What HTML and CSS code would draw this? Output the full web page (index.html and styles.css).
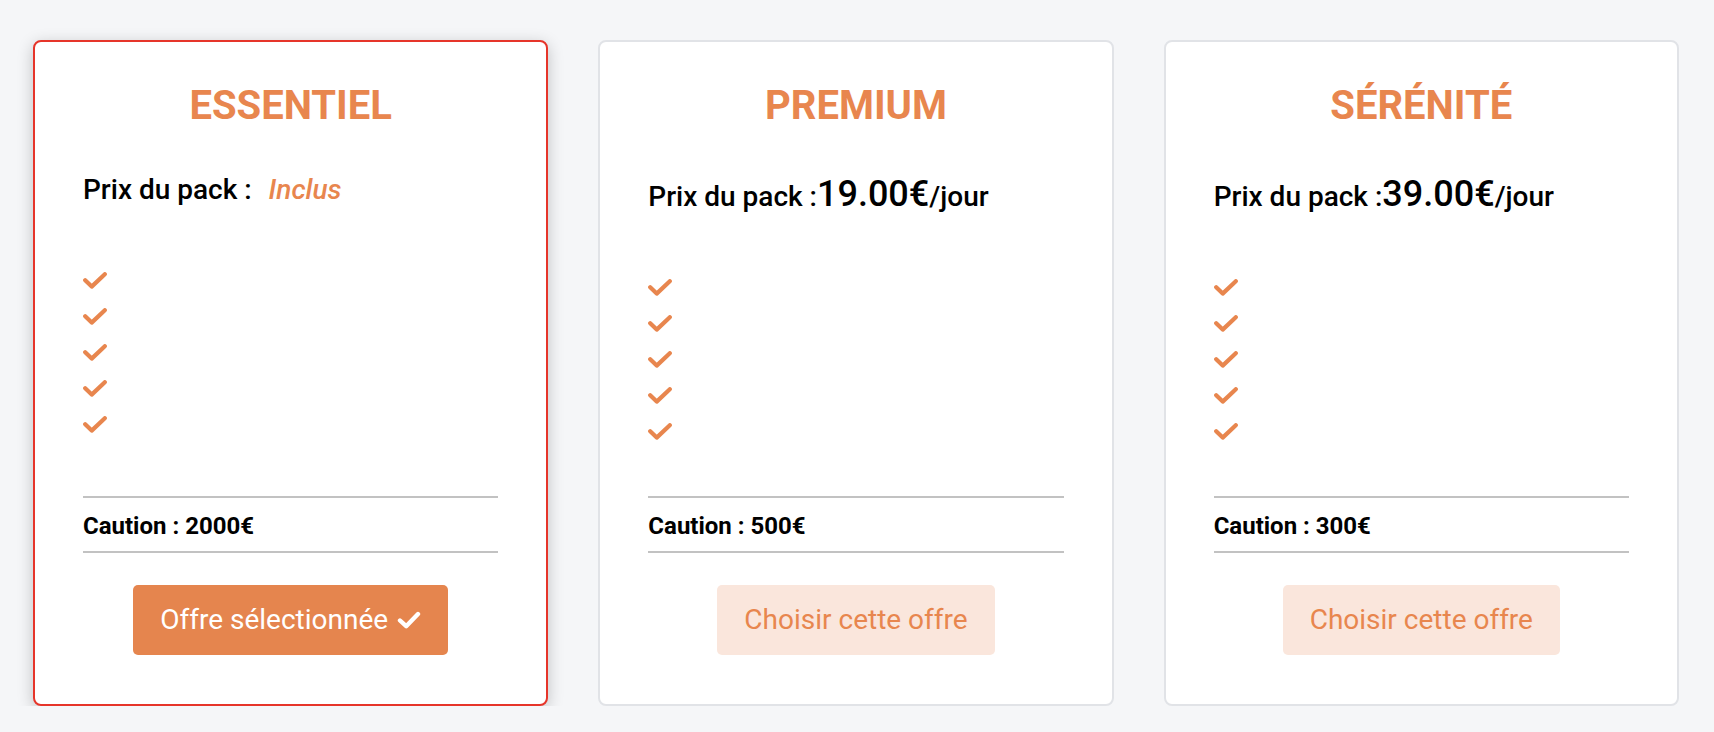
FILE: index.html
```html
<!DOCTYPE html>
<html lang="fr">
<head>
<meta charset="utf-8">
<title>Packs</title>
<link rel="stylesheet" href="styles.css">
</head>
<body>
<main class="offers">
  <section class="card card--selected">
    <h2 class="card__title">ESSENTIEL</h2>
    <p class="price">Prix du pack : <em class="price__included">Inclus</em></p>
    <ul class="features">
      <li><svg class="tick" viewBox="0 0 24 17"><polyline points="2.2,8.2 8.7,14.6 21.8,2.2"/></svg></li>
      <li><svg class="tick" viewBox="0 0 24 17"><polyline points="2.2,8.2 8.7,14.6 21.8,2.2"/></svg></li>
      <li><svg class="tick" viewBox="0 0 24 17"><polyline points="2.2,8.2 8.7,14.6 21.8,2.2"/></svg></li>
      <li><svg class="tick" viewBox="0 0 24 17"><polyline points="2.2,8.2 8.7,14.6 21.8,2.2"/></svg></li>
      <li><svg class="tick" viewBox="0 0 24 17"><polyline points="2.2,8.2 8.7,14.6 21.8,2.2"/></svg></li>
    </ul>
    <div class="card__footer">
      <p class="deposit">Caution : 2000€</p>
      <button class="btn btn--selected">Offre sélectionnée<svg class="btn__tick" viewBox="0 0 24 18"><polyline points="3,9.5 9.2,15.2 21,3"/></svg></button>
    </div>
  </section>

  <section class="card">
    <h2 class="card__title">PREMIUM</h2>
    <p class="price">Prix du pack :<span class="price__amount">19.00€</span>/jour</p>
    <ul class="features">
      <li><svg class="tick" viewBox="0 0 24 17"><polyline points="2.2,8.2 8.7,14.6 21.8,2.2"/></svg></li>
      <li><svg class="tick" viewBox="0 0 24 17"><polyline points="2.2,8.2 8.7,14.6 21.8,2.2"/></svg></li>
      <li><svg class="tick" viewBox="0 0 24 17"><polyline points="2.2,8.2 8.7,14.6 21.8,2.2"/></svg></li>
      <li><svg class="tick" viewBox="0 0 24 17"><polyline points="2.2,8.2 8.7,14.6 21.8,2.2"/></svg></li>
      <li><svg class="tick" viewBox="0 0 24 17"><polyline points="2.2,8.2 8.7,14.6 21.8,2.2"/></svg></li>
    </ul>
    <div class="card__footer">
      <p class="deposit">Caution : 500€</p>
      <button class="btn btn--choose">Choisir cette offre</button>
    </div>
  </section>

  <section class="card">
    <h2 class="card__title">SÉRÉNITÉ</h2>
    <p class="price">Prix du pack :<span class="price__amount">39.00€</span>/jour</p>
    <ul class="features">
      <li><svg class="tick" viewBox="0 0 24 17"><polyline points="2.2,8.2 8.7,14.6 21.8,2.2"/></svg></li>
      <li><svg class="tick" viewBox="0 0 24 17"><polyline points="2.2,8.2 8.7,14.6 21.8,2.2"/></svg></li>
      <li><svg class="tick" viewBox="0 0 24 17"><polyline points="2.2,8.2 8.7,14.6 21.8,2.2"/></svg></li>
      <li><svg class="tick" viewBox="0 0 24 17"><polyline points="2.2,8.2 8.7,14.6 21.8,2.2"/></svg></li>
      <li><svg class="tick" viewBox="0 0 24 17"><polyline points="2.2,8.2 8.7,14.6 21.8,2.2"/></svg></li>
    </ul>
    <div class="card__footer">
      <p class="deposit">Caution : 300€</p>
      <button class="btn btn--choose">Choisir cette offre</button>
    </div>
  </section>
</main>
</body>
</html>
```

FILE: styles.css
```css
* { box-sizing: border-box; }

html, body {
  margin: 0;
  padding: 0;
  background: #f5f6f8;
  font-family: Roboto, "Liberation Sans", Arial, sans-serif;
  color: #000;
}

.offers {
  display: grid;
  grid-template-columns: repeat(3, 1fr);
  gap: 50px;
  padding: 40px 35px 0 33px;
  align-items: stretch;
}

.card {
  display: flex;
  flex-direction: column;
  background: #fff;
  border: 2px solid #e1e3e7;
  border-radius: 8px;
  padding: 40px 48px 49px;
}

.card--selected {
  border-color: #e6352a;
  box-shadow: 0 4px 16px rgba(0, 0, 0, 0.22);
}

.card__title {
  margin: 0;
  text-align: center;
  font-size: 40px;
  line-height: 48px;
  font-weight: 700;
  color: #e8864e;
}

.price {
  margin: 43px 0 0;
  font-size: 28px;
  font-weight: 500;
  line-height: normal;
}

.price__included {
  display: inline-block;
  margin-left: 10px;
  padding-bottom: 3px;
  font-style: italic;
  color: #e8864e;
}

.price__amount {
  font-size: 36px;
  line-height: 1.2;
}

.features {
  list-style: none;
  margin: 53px 0 47px;
  padding: 0;
}

.features li {
  height: 36px;
  display: flex;
  align-items: center;
}

.tick {
  width: 24px;
  height: 17px;
  fill: none;
  stroke: #e8864e;
  stroke-width: 4.2;
  stroke-linecap: round;
  stroke-linejoin: round;
}

.card__footer {
  margin-top: auto;
  display: flex;
  flex-direction: column;
  align-items: center;
}

.deposit {
  align-self: stretch;
  margin: 0;
  padding: 14px 0 11px;
  border-top: 2px solid #c2c2c2;
  border-bottom: 2px solid #c2c2c2;
  font-size: 24px;
  font-weight: 700;
  line-height: normal;
}

.btn {
  margin-top: 32px;
  display: inline-flex;
  align-items: center;
  border: 0;
  border-radius: 5px;
  padding: 18px 27px 19px;
  font-family: Roboto, "Liberation Sans", Arial, sans-serif;
  font-size: 28px;
  line-height: 33px;
  font-weight: 400;
  cursor: pointer;
}

.btn--selected {
  background: #e5854e;
  color: #fff;
}

.btn--choose {
  background: #fae6dc;
  color: #e8864e;
}

.btn__tick {
  width: 24px;
  height: 18px;
  margin-left: 9px;
  fill: none;
  stroke: #fff;
  stroke-width: 4.4;
  stroke-linecap: round;
  stroke-linejoin: round;
}
```
